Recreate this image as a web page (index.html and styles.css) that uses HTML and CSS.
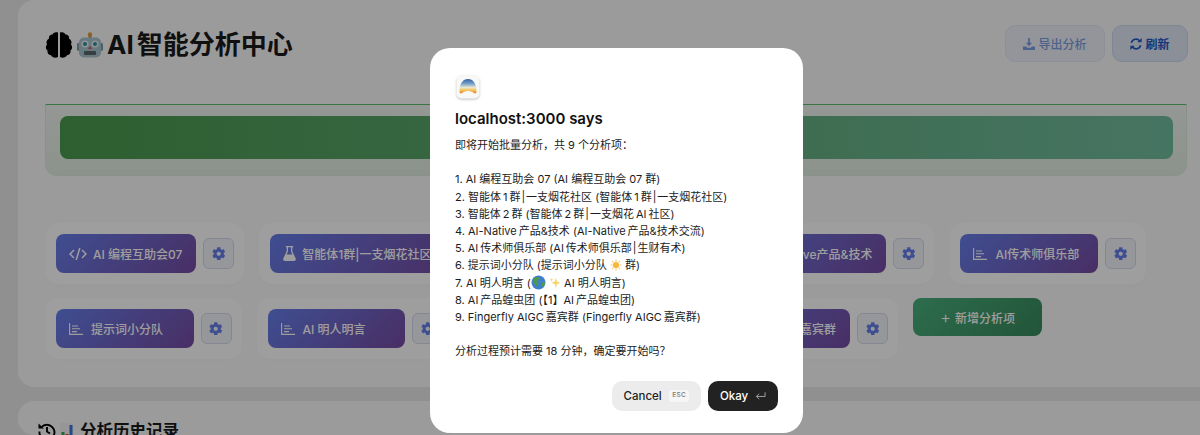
FILE: index.html
```html
<!DOCTYPE html>
<html lang="zh-CN">
<head>
  <meta charset="UTF-8">
  <title>AI 智能分析中心</title>
  <link rel="stylesheet" href="styles.css">
</head>
<body>
  <!-- shared icons -->
  <svg class="icon-defs" aria-hidden="true">
    <symbol id="i-gear" viewBox="0 0 512 512"><path fill="currentColor" d="M487.4 315.7l-42.6-24.6c4.3-23.2 4.3-47 0-70.2l42.6-24.6c4.9-2.8 7.1-8.6 5.5-14-11.1-35.6-30-67.8-54.7-94.6-3.8-4.1-10-5.1-14.8-2.3L380.8 110c-17.9-15.4-38.5-27.3-60.8-35.1V25.8c0-5.6-3.9-10.5-9.4-11.7-36.7-8.2-74.3-7.8-109.2 0-5.5 1.2-9.4 6.1-9.4 11.7V75c-22.2 7.9-42.8 19.8-60.8 35.1L88.7 85.5c-4.9-2.8-11-1.9-14.8 2.3-24.7 26.7-43.6 58.9-54.7 94.6-1.7 5.4.6 11.2 5.5 14L67.3 221c-4.3 23.2-4.3 47 0 70.2l-42.6 24.6c-4.9 2.8-7.1 8.6-5.5 14 11.1 35.6 30 67.8 54.7 94.6 3.8 4.1 10 5.1 14.8 2.3l42.6-24.6c17.9 15.4 38.5 27.3 60.8 35.1v49.2c0 5.6 3.9 10.5 9.4 11.7 36.7 8.2 74.3 7.8 109.2 0 5.5-1.2 9.4-6.1 9.4-11.7v-49.2c22.2-7.9 42.8-19.8 60.8-35.1l42.6 24.6c4.9 2.8 11 1.9 14.8-2.3 24.7-26.7 43.6-58.9 54.7-94.6 1.5-5.5-.7-11.3-5.6-14.1zM256 336c-44.1 0-80-35.9-80-80s35.9-80 80-80 80 35.9 80 80-35.9 80-80 80z"/></symbol>
    <symbol id="i-code" viewBox="0 0 18 14"><path fill="none" stroke="currentColor" stroke-width="1.5" d="M5 3L1 7l4 4M13 3l4 4-4 4M10.8 1L7.2 13"/></symbol>
    <symbol id="i-flask" viewBox="0 0 14 16"><path fill="currentColor" d="M3 0h8v1.4h-1v4.2l3.6 7.6c.6 1.300-.2 2.800-1.700 2.800H2.100C.6 16-.2 14.500.4 13.200L4 5.600V1.400H3zM5.400 1.400v4.500L3.900 9.200h6.200L8.600 5.900V1.400z"/></symbol>
    <symbol id="i-chart" viewBox="0 0 14 12"><path fill="none" stroke="currentColor" stroke-width="1.100" d="M.6 0v11.400H14M3 3h6M3 5.800h8M3 8.600h5"/></symbol>
    <symbol id="i-download" viewBox="0 0 14 14"><path fill="currentColor" d="M6 0h2v5.500h2.600L7 9.500 3.400 5.500H6zM0 10h3.500L5 11.500h4L10.500 10H14v4H0z"/></symbol>
    <symbol id="i-sync" viewBox="0 0 14 14"><path fill="none" stroke="currentColor" stroke-width="1.900" d="M1.600 5.600A5.600 5.600 0 0 1 11.300 3.400M12.400 8.400A5.600 5.600 0 0 1 2.700 10.600"/><path fill="currentColor" d="M13.600 0v5H8.600zM.4 14V9h5z"/></symbol>
  </svg>

  <div class="page">
    <section class="panel">
      <header class="panel-head">
        <h1 class="page-title">
          <svg class="emoji-brain" viewBox="0 0 28 28"><path fill="#000" d="M13 1.500C10 .5 8 2 7.500 3.500 5 3.500 3.500 5.500 4 7.500 1.500 9 1 11.500 2 13.500.3 15.500.5 18 2.500 19.500 2 22 3.500 24 6 24.300 7 26.500 10.500 27.500 13 26zM15 1.500C18 .5 20 2 20.500 3.500 23 3.500 24.500 5.500 24 7.500 26.500 9 27 11.500 26 13.500 27.700 15.500 27.500 18 25.500 19.500 26 22 24.500 24 22 24.300 21 26.500 17.500 27.500 15 26z"/></svg>
          <svg class="emoji-robot" viewBox="0 0 26 26">
            <circle cx="13" cy="2.500" r="2.200" fill="#e2a13c"/>
            <rect x="11.500" y="3.500" width="3" height="3" fill="#d58a3a"/>
            <rect x="0" y="11" width="3" height="8" rx="1.400" fill="#7f98a4"/>
            <rect x="23" y="11" width="3" height="8" rx="1.400" fill="#7f98a4"/>
            <rect x="2" y="5.500" width="22" height="20" rx="5" fill="#a9c4cf"/>
            <circle cx="8" cy="12" r="3.600" fill="#e9eef0"/>
            <circle cx="18" cy="12" r="3.600" fill="#e9eef0"/>
            <circle cx="8" cy="12" r="2" fill="#2e8f9e"/>
            <circle cx="18" cy="12" r="2" fill="#2e8f9e"/>
            <path fill="#d0574e" d="M13 14l2 3h-4z"/>
            <rect x="7" y="19" width="12" height="4" rx="1" fill="#55646c"/>
          </svg>
          <span>AI 智能分析中心</span>
        </h1>
        <div class="head-actions">
          <button class="ghost-btn export-btn"><svg class="ico-sm"><use href="#i-download"/></svg>导出分析</button>
          <button class="ghost-btn refresh-btn"><svg class="ico-sm"><use href="#i-sync"/></svg>刷新</button>
        </div>
      </header>

      <div class="progress-box">
        <div class="progress-bar"></div>
      </div>

      <div class="groups">
        <div class="group">
          <button class="group-btn"><svg class="ico-code"><use href="#i-code"/></svg>AI 编程互助会07</button>
          <button class="gear-btn"><svg class="ico-gear"><use href="#i-gear"/></svg></button>
        </div>
        <div class="group">
          <button class="group-btn"><svg class="ico-flask"><use href="#i-flask"/></svg>智能体1群|一支烟花社区</button>
          <button class="gear-btn"><svg class="ico-gear"><use href="#i-gear"/></svg></button>
        </div>
        <div class="group">
          <button class="group-btn wide"><svg class="ico-chart"><use href="#i-chart"/></svg>智能体2群</button>
          <button class="gear-btn"><svg class="ico-gear"><use href="#i-gear"/></svg></button>
        </div>
        <div class="group">
          <button class="group-btn"><svg class="ico-chart"><use href="#i-chart"/></svg>AI-Native产品&amp;技术</button>
          <button class="gear-btn"><svg class="ico-gear"><use href="#i-gear"/></svg></button>
        </div>
        <div class="group">
          <button class="group-btn"><svg class="ico-chart"><use href="#i-chart"/></svg>AI传术师俱乐部</button>
          <button class="gear-btn"><svg class="ico-gear"><use href="#i-gear"/></svg></button>
        </div>
        <div class="group">
          <button class="group-btn"><svg class="ico-chart"><use href="#i-chart"/></svg>提示词小分队</button>
          <button class="gear-btn"><svg class="ico-gear"><use href="#i-gear"/></svg></button>
        </div>
        <div class="group">
          <button class="group-btn"><svg class="ico-chart"><use href="#i-chart"/></svg>AI 明人明言</button>
          <button class="gear-btn"><svg class="ico-gear"><use href="#i-gear"/></svg></button>
        </div>
        <div class="group">
          <button class="group-btn narrow"><svg class="ico-chart"><use href="#i-chart"/></svg>AI产品蝗虫团</button>
          <button class="gear-btn"><svg class="ico-gear"><use href="#i-gear"/></svg></button>
        </div>
        <div class="group">
          <button class="group-btn"><svg class="ico-chart"><use href="#i-chart"/></svg>Fingerfly AIGC嘉宾群</button>
          <button class="gear-btn"><svg class="ico-gear"><use href="#i-gear"/></svg></button>
        </div>
        <button class="add-btn"><span class="plus">+</span>新增分析项</button>
      </div>
    </section>

    <section class="panel history">
      <h2 class="history-title">
        <svg class="ico-history" viewBox="0 0 18 18"><path fill="none" stroke="#000" stroke-width="1.900" d="M3.200 5.500A7.500 7.500 0 1 1 1.500 9.500M9 5v4.500l3 2"/><path fill="#000" d="M.5 1.500l5.500 5H.5z"/></svg>
        <svg class="ico-bars" viewBox="0 0 14 16"><rect width="14" height="16" fill="#f2f2f2"/><rect x="1.500" y="9" width="3" height="7" fill="#3aa657"/><rect x="5.500" y="11" width="3" height="5" fill="#d9413c"/><rect x="9.500" y="2" width="3" height="14" fill="#3c78d8"/></svg>
        <span>分析历史记录</span>
      </h2>
    </section>
  </div>

  <!-- Confirm dialog -->
  <div class="overlay">
    <div class="dialog">
      <svg class="dialog-icon" viewBox="0 0 24 24">
        <defs>
          <linearGradient id="arcFill" x1="0" y1="0" x2="0" y2="1">
            <stop offset="0" stop-color="#2f62a5"/>
            <stop offset=".35" stop-color="#7fa6c9"/>
            <stop offset=".58" stop-color="#e9e6d2"/>
            <stop offset=".78" stop-color="#f5c553"/>
            <stop offset="1" stop-color="#e8702f"/>
          </linearGradient>
        </defs>
        <rect x=".5" y=".5" width="23" height="23" rx="5" fill="#f8f8f6"/>
        <path fill="url(#arcFill)" d="M3.500 16C3.500 8.500 7 4 12 4s8.500 4.500 8.500 12c0 2.500-1 3-2.500 2C16 16.500 14 16 12 16s-4 .5-6 2c-1.500 1-2.500.5-2.500-2z"/>
      </svg>
      <h3 class="dialog-title">localhost:3000 says</h3>
      <div class="dialog-text">
        <p>即将开始批量分析，共 9 个分析项：</p>
        <p class="blank"></p>
        <p>1. AI 编程互助会 07 (AI 编程互助会 07 群)</p>
        <p>2. 智能体&thinsp;1&thinsp;群&#8202;|&#8202;一支烟花社区 (智能体&thinsp;1&thinsp;群&#8202;|&#8202;一支烟花社区)</p>
        <p>3. 智能体&thinsp;2&thinsp;群 (智能体&thinsp;2&thinsp;群&#8202;|&#8202;一支烟花&thinsp;AI&thinsp;社区)</p>
        <p>4. AI-Native&thinsp;产品&amp;技术 (AI-Native&thinsp;产品&amp;技术交流)</p>
        <p>5. AI&thinsp;传术师俱乐部 (AI&thinsp;传术师俱乐部&#8202;|&#8202;生财有术)</p>
        <p>6. 提示词小分队 (提示词小分队 <svg class="emoji" viewBox="0 0 14 14"><circle cx="7" cy="7" r="3.600" fill="#f6b73c"/><path stroke="#f6c85f" stroke-width="1.300" d="M7 .5v2.300M7 11.200v2.300M.5 7h2.300M11.200 7h2.300M2.400 2.400L4 4M10 10l1.600 1.600M2.400 11.600L4 10M10 4l1.600-1.600"/></svg> 群)</p>
        <p>7. AI 明人明言 (<svg class="emoji globe" viewBox="0 0 14 14"><circle cx="7" cy="7" r="6.500" fill="#3f7fd0"/><path fill="#4f9a4a" d="M3 3c2-1.500 4-1.500 5 0L6 6l1 2-2 3-2-3-1.500-1z"/><path fill="#4f9a4a" d="M10 7l2.500-1 .5 3-2.500 2.500z"/></svg> <svg class="emoji" viewBox="0 0 14 14"><path fill="#f8d468" d="M8 1l1.300 4.200L13.500 7 9.300 8.300 8 13 6.700 8.300 2.500 7l4.200-1.800zM3 1l.6 1.600L5 3.200l-1.400.6L3 5.500l-.6-1.700L1 3.200l1.400-.6z"/></svg> AI 明人明言)</p>
        <p>8. AI&thinsp;产品蝗虫团 (【1】AI&thinsp;产品蝗虫团)</p>
        <p>9. Fingerfly AIGC&thinsp;嘉宾群 (Fingerfly AIGC&thinsp;嘉宾群)</p>
        <p class="blank"></p>
        <p>分析过程预计需要 18 分钟，确定要开始吗？</p>
      </div>
      <div class="dialog-actions">
        <button class="cancel-btn">Cancel<span class="esc-key">ESC</span></button>
        <button class="okay-btn">Okay
          <svg class="ico-return" viewBox="0 0 12 10"><path fill="none" stroke="currentColor" d="M11 1v4.500H1.500M4.500 2.500l-3 3 3 3"/></svg>
        </button>
      </div>
    </div>
  </div>
</body>
</html>
```

FILE: styles.css
```css
* {
  box-sizing: border-box;
}
html,
body {
  margin: 0;
  height: 435px;
  overflow: hidden;
}
body {
  background-color: #e8e8e8;
  font-family: Inter, "Noto Sans CJK SC", sans-serif;
  color: #111;
}
.icon-defs {
  display: none;
}
button {
  font-family: inherit;
  cursor: pointer;
}
.page {
  padding-left: 18px;
}

/* Main panel */
.panel {
  background-color: #fbfbfb;
  border-radius: 16px 0 0 16px;
  padding: 25px 13px 28px 27px;
  height: 387px;
}
.panel-head {
  display: flex;
  justify-content: space-between;
  align-items: flex-start;
  height: 37px;
}
.page-title {
  display: flex;
  align-items: center;
  margin: 4px 0 0;
  font-size: 26px;
  font-weight: 700;
  line-height: 32px;
  word-spacing: -3px;
  color: #1a1a1a;
}
.emoji-brain {
  width: 28px;
  height: 28px;
  margin-right: 4px;
}
.emoji-robot {
  width: 26px;
  height: 26px;
  margin-right: 4px;
}
.head-actions {
  display: flex;
  gap: 7px;
  margin-right: -1px;
}
.ghost-btn {
  display: flex;
  align-items: center;
  justify-content: center;
  gap: 3px;
  height: 37px;
  border-radius: 10px;
  font-size: 12px;
  font-weight: 500;
  border: 1px solid #d5e0f5;
}
.export-btn {
  width: 100px;
  color: #7c9ee0;
  background-color: #edf1f8;
  border-color: #e0e7f3;
}
.refresh-btn {
  width: 76px;
  color: #2457c5;
  background-color: #dfe7f5;
  border-color: #ccd8ef;
  font-weight: 600;
}
.ico-sm {
  width: 12px;
  height: 12px;
}

/* Progress */
.progress-box {
  margin-top: 42px;
  height: 72px;
  padding: 11px 13px 0 14px;
  border-top: 1.500px solid #5fbb6c;
  border-left: 1px solid #dfe9df;
  border-right: 1px solid #dfe9df;
  border-bottom: 1px solid #dfe9df;
  border-radius: 0 0 12px 12px;
  background: linear-gradient(180deg, #f0f5f0 0%, #e2ece2 100%);
}
.progress-bar {
  height: 43px;
  border-radius: 8px;
  background: linear-gradient(90deg, #4a9a4e 0%, #72bc9f 100%);
}

/* Analysis items */
.groups {
  display: flex;
  flex-wrap: wrap;
  align-items: flex-start;
  gap: 14px 15px;
  margin-top: 47px;
}
.group {
  display: flex;
  align-items: center;
  gap: 7px;
  padding: 11px 10px 11px 11px;
  border-radius: 14px;
  background-color: #fff;
  box-shadow: 0 2px 8px rgba(0, 0, 0, 0.02);
}
.group-btn {
  display: flex;
  align-items: center;
  min-width: 137.500px;
  height: 39px;
  padding: 0 14px 0 13px;
  border: none;
  border-radius: 8px;
  font-size: 12px;
  font-weight: 500;
  color: #fff;
  background: linear-gradient(135deg, #667eea 0%, #764ba2 100%);
}
.group-btn.wide {
  min-width: 134px;
}
.group-btn.narrow {
  min-width: 128px;
}
.gear-btn {
  display: flex;
  align-items: center;
  justify-content: center;
  width: 31px;
  height: 31px;
  padding: 0;
  border-radius: 6px;
  color: #667eea;
  background-color: #f3f4fa;
  border: 1px solid #d6daea;
}
.ico-gear {
  width: 13.500px;
  height: 13.500px;
}
.ico-code {
  width: 18px;
  height: 14px;
  margin-right: 6px;
}
.ico-flask {
  width: 13px;
  height: 15px;
  margin-right: 6px;
}
.ico-chart {
  width: 14px;
  height: 12px;
  margin-right: 8px;
}
.add-btn {
  display: flex;
  align-items: center;
  justify-content: center;
  gap: 4px;
  width: 129px;
  height: 38px;
  border: none;
  border-radius: 8px;
  font-size: 12px;
  font-weight: 500;
  color: #fff;
  background: linear-gradient(135deg, #48b07c 0%, #38885c 100%);
}
.plus {
  font-size: 17px;
  font-weight: 300;
  line-height: 17px;
}

/* History */
.history {
  height: 34px;
  margin-top: 14px;
  padding: 18px 20px 0;
  overflow: hidden;
}
.history-title {
  display: flex;
  align-items: center;
  margin: 0;
  font-size: 16.500px;
  font-weight: 700;
  line-height: 24px;
  color: #1a1a1a;
}
.ico-history {
  width: 18px;
  height: 18px;
  margin-right: 4px;
}
.ico-bars {
  width: 14px;
  height: 16px;
  margin-right: 6px;
}

/* Dialog */
.overlay {
  position: fixed;
  top: 0;
  left: 0;
  width: 100%;
  height: 100%;
  padding: 48px 0 0 430px;
  background-color: rgba(0, 0, 0, 0.38);
  backdrop-filter: blur(0.5px);
}
.dialog {
  width: 373px;
  height: 385px;
  padding: 27px 25px 0;
  border-radius: 20px;
  background-color: #fff;
}
.dialog-icon {
  display: block;
  width: 24px;
  height: 24px;
  margin-left: 1px;
  filter: drop-shadow(0 1px 1px rgba(0, 0, 0, 0.25));
}
.dialog-title {
  margin: 9px 0 0;
  font-size: 15px;
  font-weight: 600;
  line-height: 22px;
  color: #111;
}
.dialog-text {
  margin-top: 7px;
  font-size: 11px;
  line-height: 17.200px;
  color: #1c1c1c;
}
.dialog-text p {
  margin: 0;
  white-space: nowrap;
}
.dialog-text .blank {
  height: 17.200px;
}
.emoji {
  width: 12px;
  height: 12px;
  vertical-align: -2px;
}
.emoji.globe {
  width: 15px;
  height: 15px;
  vertical-align: -3px;
}
.dialog-actions {
  display: flex;
  justify-content: flex-end;
  gap: 7px;
  margin-top: 20px;
}
.cancel-btn,
.okay-btn {
  display: flex;
  align-items: center;
  justify-content: center;
  height: 30px;
  border: none;
  border-radius: 10px;
  font-size: 11.500px;
  font-weight: 500;
}
.cancel-btn {
  width: 89px;
  gap: 7px;
  color: #222;
  background-color: #ececec;
}
.esc-key {
  padding: 1.500px 3.500px;
  border-radius: 3px;
  font-size: 6.500px;
  line-height: 9px;
  letter-spacing: 0.3px;
  color: #777;
  background-color: #f6f6f6;
}
.okay-btn {
  width: 70px;
  gap: 7px;
  color: #fff;
  background-color: #222;
}
.ico-return {
  width: 11px;
  height: 10px;
  color: #aaa;
}
```
